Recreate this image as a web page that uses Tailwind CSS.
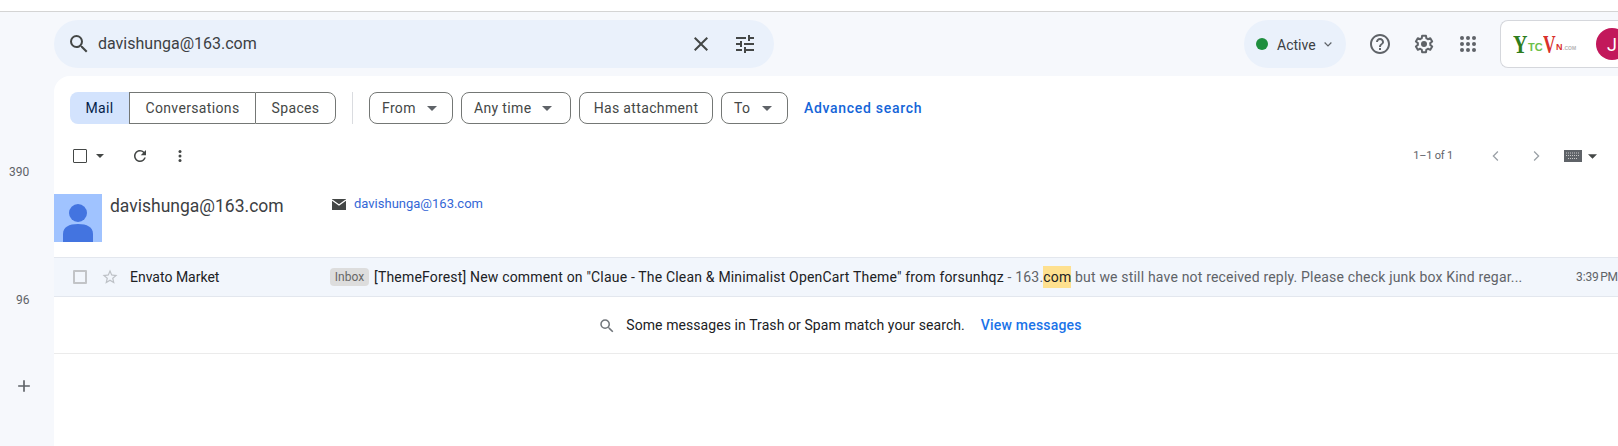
<!DOCTYPE html>
<html lang="en">
<head>
  <meta charset="UTF-8">
  <title>Search results - Gmail</title>
  <script src="https://cdn.jsdelivr.net/npm/@tailwindcss/browser@4"></script>
</head>
<body class="w-[1618px] h-[446px] overflow-hidden bg-[#f6f8fc] font-['Roboto',sans-serif] text-[#202124]">
  <div class="h-[12px] bg-white border-b border-[#d4d4d4]"></div>

  <div class="flex h-[434px]">
    <!-- left rail -->
    <aside class="w-[54px] shrink-0 flex flex-col items-center text-[12px] leading-[16px] text-[#5f6368]">
      <div class="mt-[152px] w-full pl-[9px]">390</div>
      <div class="mt-[112px] w-full pl-[16px]">96</div>
      <svg class="mt-[68px] w-[20px] h-[20px] ml-[-6px]" viewBox="0 0 24 24" fill="#5f6368"><path d="M19 13h-6v6h-2v-6H5v-2h6V5h2v6h6v2z"/></svg>
    </aside>

    <div class="w-[1564px] shrink-0 flex flex-col">
      <!-- top bar -->
      <header class="h-[64px] pt-[8px] flex items-start">
        <div class="w-[720px] h-[48px] shrink-0 rounded-full bg-[#eaf1fb] flex items-center pl-[13px] pr-[12px]">
          <svg class="w-[24px] h-[24px] text-[#444746]" viewBox="0 0 24 24" fill="currentColor"><path d="M15.5 14h-.79l-.28-.27A6.471 6.471 0 0 0 16 9.5 6.5 6.5 0 1 0 9.5 16c1.61 0 3.09-.59 4.23-1.57l.27.28v.79l5 4.99L20.49 19l-4.99-5zm-6 0C7.01 14 5 11.99 5 9.5S7.01 5 9.5 5 14 7.01 14 9.5 11.99 14 9.5 14z"/></svg>
          <span class="ml-[7px] text-[16px] text-[#3c4043]">davishunga@163.com</span>
          <svg class="ml-auto w-[24px] h-[24px] text-[#444746]" viewBox="0 0 24 24" fill="currentColor"><path d="M19 6.41L17.59 5 12 10.59 6.41 5 5 6.41 10.59 12 5 17.59 6.41 19 12 13.41 17.59 19 19 17.59 13.41 12z"/></svg>
          <svg class="ml-[20px] mr-[5px] w-[24px] h-[24px] text-[#444746]" viewBox="0 0 24 24" fill="currentColor"><path d="M3 17v2h6v-2H3zM3 5v2h10V5H3zm10 16v-2h8v-2h-8v-2h-2v6h2zM7 9v2H3v2h4v2h2V9H7zm14 4v-2H11v2h10zm-6-4h2V7h4V5h-4V3h-2v6z"/></svg>
        </div>

        <div class="ml-[470px] w-[102px] h-[48px] shrink-0 rounded-full bg-[#eaf1fb] flex items-center pl-[12px]">
          <span class="w-[12px] h-[12px] rounded-full bg-[#1e8e3e]"></span>
          <span class="ml-[9px] mt-[2px] text-[14px] text-[#3c4043]">Active</span>
          <svg class="ml-[3px] w-[18px] h-[18px] text-[#5f6368]" viewBox="0 0 24 24" fill="none" stroke="currentColor" stroke-width="1.6"><path d="M7.5 10l4.5 4.5 4.5-4.5"/></svg>
        </div>

        <div class="ml-[22px] h-[48px] shrink-0 flex items-center gap-[20px] text-[#5f6368]">
          <svg class="w-[24px] h-[24px]" viewBox="0 0 24 24" fill="currentColor"><path d="M11 18h2v-2h-2v2zm1-16C6.48 2 2 6.48 2 12s4.48 10 10 10 10-4.48 10-10S17.52 2 12 2zm0 18c-4.41 0-8-3.59-8-8s3.59-8 8-8 8 3.59 8 8-3.59 8-8 8zm0-14c-2.21 0-4 1.79-4 4h2c0-1.1.9-2 2-2s2 .9 2 2c0 2-3 1.75-3 5h2c0-2.25 3-2.5 3-5 0-2.21-1.79-4-4-4z"/></svg>
          <svg class="w-[24px] h-[24px]" viewBox="0 0 24 24"><path fill="none" stroke="currentColor" stroke-width="2" stroke-linejoin="round" d="M18.2 12.9c.04-.3.05-.6.05-.9s-.02-.6-.06-.9l2-1.55-1.9-3.3-2.35.95c-.48-.37-1-.68-1.58-.92L14 3.8h-3.9l-.36 2.48c-.58.24-1.1.55-1.58.92l-2.36-.95-1.9 3.3 2 1.55c-.04.3-.06.6-.06.9s.02.6.06.9l-2 1.55 1.9 3.3 2.36-.95c.48.37 1 .68 1.58.92l.36 2.48H14l.36-2.48c.58-.24 1.1-.55 1.58-.92l2.35.95 1.9-3.3-2-1.55z"/><circle cx="12" cy="12" r="3" fill="currentColor"/></svg>
          <svg class="w-[24px] h-[24px]" viewBox="0 0 24 24" fill="currentColor"><circle cx="6" cy="6" r="2"/><circle cx="12" cy="6" r="2"/><circle cx="18" cy="6" r="2"/><circle cx="6" cy="12" r="2"/><circle cx="12" cy="12" r="2"/><circle cx="18" cy="12" r="2"/><circle cx="6" cy="18" r="2"/><circle cx="12" cy="18" r="2"/><circle cx="18" cy="18" r="2"/></svg>
        </div>

        <div class="ml-[20px] w-[118px] h-[48px] shrink-0 rounded-l-[8px] bg-white border border-r-0 border-[#d5d7dc] flex items-center pl-[12px] overflow-hidden">
          <span class="w-[15px] shrink-0 origin-left scale-x-80 text-[25px] leading-none font-bold text-[#2e7d1c] font-['Liberation_Serif',serif]">Y</span>
          <span class="mt-[6px] w-[13px] shrink-0 text-[11px] leading-none font-bold text-[#6cc04a] font-['Liberation_Sans',sans-serif]">TC</span>
          <span class="ml-[2px] w-[12px] shrink-0 origin-left scale-x-70 text-[25px] leading-none font-bold text-[#d9302c] font-['Liberation_Serif',serif]">V</span>
          <span class="ml-[1px] mt-[7px] w-[7px] shrink-0 text-[9px] leading-none font-bold text-[#d9302c] font-['Liberation_Sans',sans-serif]">N</span>
          <span class="mt-[8px] w-[13px] shrink-0 text-[5px] leading-none font-bold text-[#b5b5b5] font-['Liberation_Sans',sans-serif]">.COM</span>
          <span class="ml-[20px] w-[32px] h-[32px] shrink-0 rounded-full bg-[#c2185b] text-white text-[18px] flex items-center justify-center">J</span>
        </div>
      </header>

      <!-- content panel -->
      <main class="flex-1 bg-white rounded-tl-[16px] overflow-hidden">
        <!-- search chips -->
        <div class="h-[32px] mt-[16px] ml-[16px] flex items-center text-[14px] text-[#444746] tracking-[0.35px]">
          <div class="h-full flex">
            <span class="w-[59px] rounded-l-[8px] bg-[#d3e3fd] text-[#041e49] flex items-center justify-center">Mail</span>
            <span class="w-[126px] border border-r-0 border-[#747775] flex items-center justify-center">Conversations</span>
            <span class="w-[81px] border border-[#747775] rounded-r-[8px] flex items-center justify-center">Spaces</span>
          </div>
          <span class="ml-[16px] w-px h-full bg-[#dadce0]"></span>
          <button class="ml-[16px] w-[84px] h-full rounded-[8px] border border-[#747775] flex items-center pl-[12px]">From
            <svg class="ml-[11px] w-[10px] h-[5px]" viewBox="0 0 10 5" fill="#5f6368"><path d="M0 0h10L5 5z"/></svg></button>
          <button class="ml-[8px] w-[110px] h-full rounded-[8px] border border-[#747775] flex items-center pl-[12px]">Any time
            <svg class="ml-[11px] w-[10px] h-[5px]" viewBox="0 0 10 5" fill="#5f6368"><path d="M0 0h10L5 5z"/></svg></button>
          <button class="ml-[8px] w-[134px] h-full rounded-[8px] border border-[#747775] flex items-center justify-center">Has attachment</button>
          <button class="ml-[8px] w-[67px] h-full rounded-[8px] border border-[#747775] flex items-center pl-[12px]">To
            <svg class="ml-[12px] w-[10px] h-[5px]" viewBox="0 0 10 5" fill="#5f6368"><path d="M0 0h10L5 5z"/></svg></button>
          <a class="ml-[16px] font-medium text-[#1565d8] tracking-[0.7px]">Advanced search</a>
        </div>

        <!-- toolbar -->
        <div class="h-[40px] mt-[12px] flex items-center text-[#444746]">
          <span class="ml-[19px] w-[14px] h-[14px] rounded-[1px] border-[1.5px] border-[#444746]"></span>
          <svg class="ml-[9px] w-[8px] h-[4px]" viewBox="0 0 10 5" fill="#444746"><path d="M0 0h10L5 5z"/></svg>
          <svg class="ml-[27px] w-[18px] h-[18px]" viewBox="0 0 24 24" fill="currentColor"><path d="M17.65 6.35A7.958 7.958 0 0 0 12 4c-4.42 0-7.99 3.58-7.99 8s3.57 8 7.99 8c3.73 0 6.84-2.55 7.73-6h-2.08A5.99 5.99 0 0 1 12 18c-3.31 0-6-2.69-6-6s2.69-6 6-6c1.66 0 3.14.69 4.22 1.78L13 11h7V4l-2.35 2.35z"/></svg>
          <svg class="ml-[22px] w-[18px] h-[18px]" viewBox="0 0 24 24" fill="currentColor"><circle cx="12" cy="6" r="2"/><circle cx="12" cy="12" r="2"/><circle cx="12" cy="18" r="2"/></svg>
          <span class="ml-auto text-[11px] tracking-[-0.2px] text-[#5f6368]">1–1 of 1</span>
          <svg class="ml-[34px] w-[18px] h-[18px] text-[#9aa0a6]" viewBox="0 0 24 24" fill="none" stroke="currentColor" stroke-width="1.7"><path d="M14.5 6l-6 6 6 6"/></svg>
          <svg class="ml-[22px] w-[18px] h-[18px] text-[#9aa0a6]" viewBox="0 0 24 24" fill="none" stroke="currentColor" stroke-width="1.7"><path d="M9.5 6l6 6-6 6"/></svg>
          <svg class="ml-[19px] w-[18px] h-[12px]" viewBox="0 0 18 12"><rect width="18" height="12" fill="#5f6368"/><path d="M2 3h14M2 5.5h14M4 8.5h10" stroke="#c8c8c8" stroke-width="1" stroke-dasharray="1 1"/></svg>
          <svg class="ml-[6px] mr-[21px] w-[9px] h-[5px]" viewBox="0 0 10 5" fill="#444746"><path d="M0 0h10L5 5z"/></svg>
        </div>

        <!-- contact card -->
        <div class="h-[48px] mt-[18px] flex items-start">
          <svg class="w-[48px] h-[48px] shrink-0" viewBox="0 0 48 48"><rect width="48" height="48" fill="#a0c3ff"/><circle cx="24" cy="19" r="9" fill="#4374e0"/><path d="M9 48V40c0-7 6-10 15-10s15 3 15 10v8z" fill="#4374e0"/></svg>
          <span class="ml-[8px] mt-[1px] w-[222px] shrink-0 text-[17.5px] leading-[22px] text-[#3c4043]">davishunga@163.com</span>
          <svg class="mt-[5px] w-[14px] h-[11px]" viewBox="0 0 14 11"><rect width="14" height="11" fill="#444746"/><path d="M0 1l7 5 7-5" fill="none" stroke="#fff" stroke-width="1.3"/></svg>
          <span class="ml-[8px] mt-[2px] text-[13px] leading-[16px] text-[#3367d6]">davishunga@163.com</span>
        </div>

        <!-- message row -->
        <div class="h-[40px] mt-[15px] bg-[#f2f6fc] border-y border-[#e3e7ee] flex items-center text-[14px] whitespace-nowrap overflow-hidden">
          <span class="ml-[19px] w-[14px] h-[14px] shrink-0 rounded-[1px] border-2 border-[#c2c4c7]"></span>
          <svg class="ml-[14px] w-[18px] h-[18px] shrink-0 text-[#bdc1c6]" viewBox="0 0 24 24" fill="currentColor"><path d="M22 9.24l-7.19-.62L12 2 9.19 8.63 2 9.24l5.46 4.73L5.82 21 12 17.27 18.18 21l-1.63-7.03L22 9.24zM12 15.4l-3.76 2.27 1-4.28-3.32-2.88 4.38-.38L12 6.1l1.71 4.04 4.38.38-3.32 2.88 1 4.28L12 15.4z"/></svg>
          <span class="ml-[11px] w-[200px] shrink-0">Envato Market</span>
          <span class="w-[39px] h-[18px] shrink-0 rounded-[4px] bg-[#dddddd] text-[#666666] text-[12px] flex items-center justify-center">Inbox</span>
          <span class="ml-[5px] w-[1150px] shrink-0 tracking-[0.18px]"><span>[ThemeForest] New comment on "Claue - The Clean &amp; Minimalist OpenCart Theme" from forsunhqz</span><span class="text-[#5f6368]"> - 163.<span class="bg-[#fee08f] text-[#202124] py-[3px]">com</span> but we still have not received reply. Please check junk box Kind regar...</span></span>
          <span class="ml-[52px] shrink-0 text-[12px] tracking-[-0.1px] text-[#5f6368]">3:39&#8239;PM</span>
        </div>

        <!-- spam notice -->
        <div class="h-[57px] pl-[8px] pt-[1px] border-b border-[#ebebeb] flex items-center justify-center text-[14px]">
          <svg class="w-[18px] h-[18px] text-[#70757a]" viewBox="0 0 24 24" fill="currentColor"><path d="M15.5 14h-.79l-.28-.27A6.471 6.471 0 0 0 16 9.5 6.5 6.5 0 1 0 9.5 16c1.61 0 3.09-.59 4.23-1.57l.27.28v.79l5 4.99L20.49 19l-4.99-5zm-6 0C7.01 14 5 11.99 5 9.5S7.01 5 9.5 5 14 7.01 14 9.5 11.99 14 9.5 14z"/></svg>
          <span class="ml-[10px] tracking-[0.08px]">Some messages in Trash or Spam match your search.</span>
          <a class="ml-[16px] font-medium text-[#1a73e8] tracking-[0.2px]">View messages</a>
        </div>
      </main>
    </div>
  </div>
</body>
</html>
